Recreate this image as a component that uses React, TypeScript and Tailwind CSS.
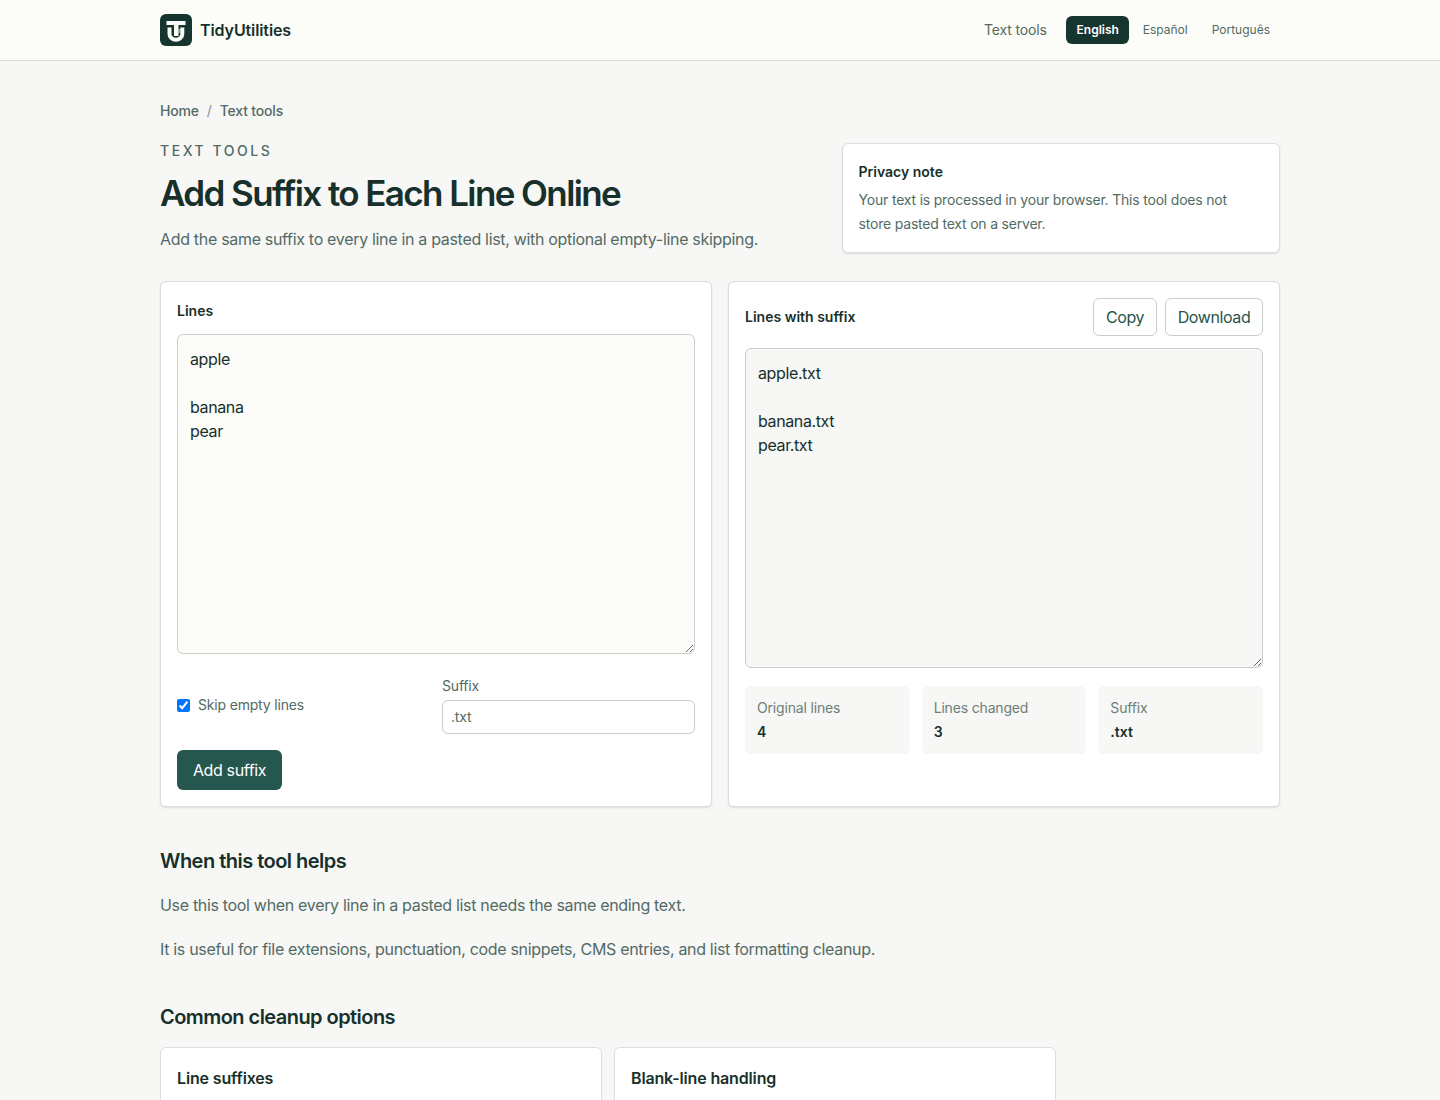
import React from "react";

const card = "rounded-md border border-[#d9e0dd] bg-white shadow-[0_1px_2px_rgba(24,60,50,0.14)]";

function Logo() {
  return (
    <svg width="32" height="32" viewBox="0 0 32 32" aria-hidden="true">
      <rect width="32" height="32" rx="6" fill="#17352f" />
      <path d="M6.500 7h19v4h-7v11h-4.500V11h-7.500z" fill="#fcfdf8" />
      <path d="M9.500 13.500v6.500a6.400 5.800 0 0 0 12.800 0V13.500" fill="none" stroke="#fcfdf8" strokeWidth="4" />
      <path d="M18.500 15h2v4h-2z" fill="#fcfdf8" opacity="0.5" />
    </svg>
  );
}

function Stat({ label, value }: { label: string; value: string }) {
  return (
    <div className="rounded-md bg-[#f7f7f5] p-3 text-sm">
      <div className="tracking-[-0.17px] text-[#6b7f79]">{label}</div>
      <div className="mt-1 font-semibold text-[#17312d]">{value}</div>
    </div>
  );
}

export default function App() {
  return (
    <div className="h-[1100px] overflow-hidden bg-[#f7f7f5] font-['Inter','Liberation_Sans',sans-serif] text-[#17302b]">
      <header className="h-[61px] border-b border-[#d9e0dd] bg-[#fcfdf8]">
        <div className="mx-auto flex h-[60px] w-[1120px] items-center justify-between">
          <a className="flex items-center gap-2 font-semibold"><Logo /><span className="tracking-[-0.1px]">TidyUtilities</span></a>
          <nav className="flex items-center text-xs text-[#526b65]">
            <a className="mr-[19px] text-sm tracking-[-0.15px]">Text tools</a>
            <a className="mr-1 flex h-7 w-[63px] items-center justify-center rounded-md bg-[#17352f] pl-px font-semibold text-white">English</a>
            <a className="px-2.5">Español</a>
            <a className="ml-1 px-2.5">Português</a>
          </nav>
        </div>
      </header>

      <main className="mx-auto w-[1120px] pt-10">
        <nav className="mb-5 flex gap-2 text-sm font-medium tracking-[-0.18px] text-[#526b65]">
          <a>Home</a><span className="font-normal text-[#82938e]">/</span><a>Text tools</a>
        </nav>

        <div className="grid grid-cols-[1.5fr_1fr] items-end gap-6">
          <div>
            <p className="text-sm font-medium uppercase tracking-[2.55px] text-[#526b65]">Text tools</p>
            <h1 className="mt-3 pt-px text-[35px] leading-[39px] font-semibold tracking-[-1.6px]">Add Suffix to Each Line Online</h1>
            <p className="mt-3 whitespace-nowrap leading-7 tracking-[-0.315px] text-[#526b65]">Add the same suffix to every line in a pasted list, with optional empty-line skipping.</p>
          </div>
          <aside className={card + " p-4 text-sm leading-6"}>
            <h2 className="font-semibold">Privacy note</h2>
            <p className="mt-1 tracking-[-0.2px] text-[#526b65]">Your text is processed in your browser. This tool does not<br />store pasted text on a server.</p>
          </aside>
        </div>

        <div className="mt-7 grid h-[526px] grid-cols-2 gap-4">
          <section className={card + " p-4"}>
            <label className="block text-sm font-semibold leading-[26px]" htmlFor="source">Lines</label>
            <textarea id="source" defaultValue={"apple\n\nbanana\npear"} className="mt-2.5 block h-80 w-full resize-y rounded-md border border-[#c5d0cc] bg-[#fcfdf8] p-3 leading-6 tracking-[-0.38px]" />
            <div className="mt-[22px] grid grid-cols-2 items-center gap-3 text-sm tracking-[-0.18px] text-[#526b65]">
              <label className="flex items-center gap-2"><input type="checkbox" defaultChecked className="size-[13px]" />Skip empty lines</label>
              <label className="block">Suffix<input defaultValue=".txt" className="mt-1 block h-[34px] w-full rounded-md border border-[#c5d0cc] px-2 pb-0.5" /></label>
            </div>
            <button className="mt-4 h-10 w-[105px] rounded-md bg-[#26574f] tracking-[-0.38px] text-white">Add suffix</button>
          </section>

          <section className={card + " p-4"}>
            <div className="flex items-center justify-between">
              <label className="text-sm font-semibold" htmlFor="result">Lines with suffix</label>
              <div className="flex gap-2 tracking-[-0.4px] text-[#28544d]">
                <button className="h-[38px] w-16 rounded-md border border-[#c5d0cc]">Copy</button>
                <button className="h-[38px] w-[98px] rounded-md border border-[#c5d0cc]">Download</button>
              </div>
            </div>
            <textarea id="result" readOnly value={"apple.txt\n\nbanana.txt\npear.txt"} className="mt-3 block h-80 w-full resize-y rounded-md border border-[#c5d0cc] bg-[#f7f7f5] p-3 leading-6 tracking-[-0.38px]" />
            <div className="mt-[18px] grid grid-cols-3 gap-3">
              <Stat label="Original lines" value="4" />
              <Stat label="Lines changed" value="3" />
              <Stat label="Suffix" value=".txt" />
            </div>
          </section>
        </div>

        <section className="mt-10">
          <h2 className="text-xl font-semibold leading-7 tracking-[-0.52px]">When this tool helps</h2>
          <div className="mt-4 space-y-4 leading-7 tracking-[-0.32px] text-[#526b65]">
            <p>Use this tool when every line in a pasted list needs the same ending text.</p>
            <p>It is useful for file extensions, punctuation, code snippets, CMS entries, and list formatting cleanup.</p>
          </div>
        </section>

        <section className="mt-10">
          <h2 className="text-xl font-semibold leading-7 tracking-[-0.55px]">Common cleanup options</h2>
          <div className="mt-4 grid w-4xl grid-cols-2 gap-3">
            <article className="h-32 rounded-md border border-[#d9e0dd] bg-white p-4"><h3 className="font-semibold leading-7 tracking-[-0.15px]">Line suffixes</h3></article>
            <article className="h-32 rounded-md border border-[#d9e0dd] bg-white p-4"><h3 className="font-semibold leading-7 tracking-[-0.15px]">Blank-line handling</h3></article>
          </div>
        </section>
      </main>
    </div>
  );
}
